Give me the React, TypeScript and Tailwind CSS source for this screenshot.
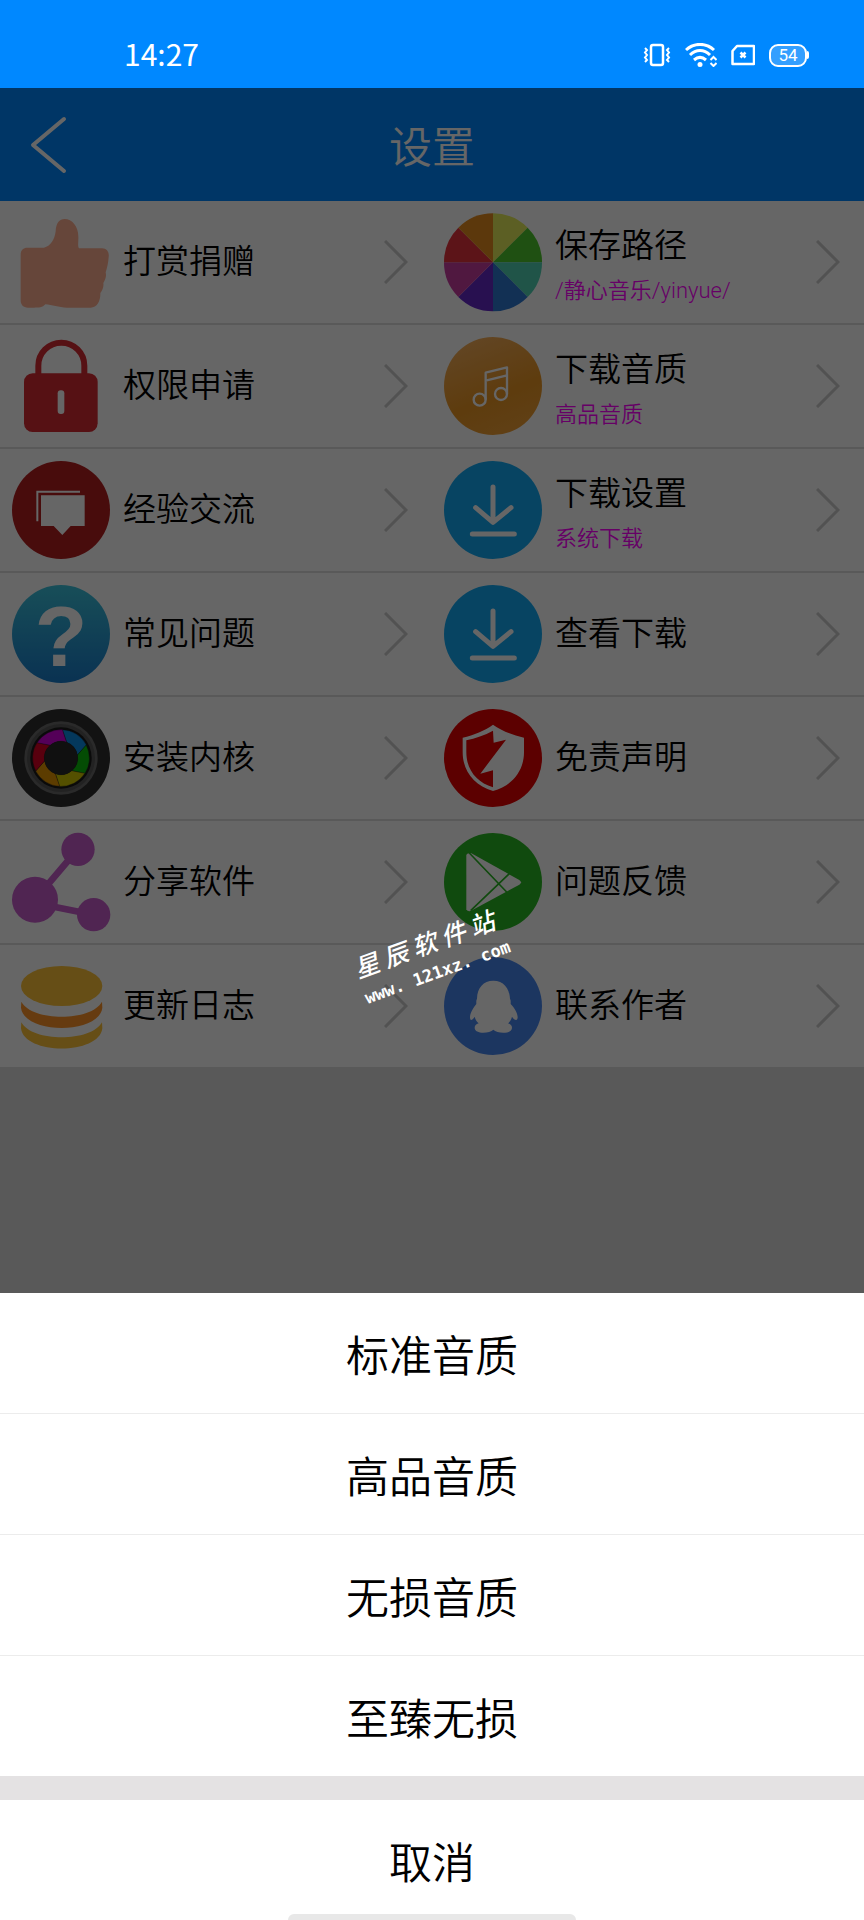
import type { ReactNode } from "react"

function Disc({ fill, children }: { fill: string; children?: ReactNode }) {
  return (
    <>
      <circle cx="147" cy="147" r="147" fill={fill} />
      {children}
    </>
  )
}

const thumb = (
  <path
    fill="#ffaf91"
    d="M46 104H96C115 100 128 80 131 55C132 30 142 18 158 18C180 18 199 40 199 70C200 85 196 98 201 106H270C285 106 292 118 290 132C289 150 285 165 281 178C284 190 280 200 274 210C276 222 271 232 265 240C266 262 256 284 236 284H165C140 284 120 275 100 274C92 284 80 284 66 284H48C34 284 26 276 26 262V124C26 111 34 104 46 104Z"
  />
)

const wheelColors = ["#e6ee5a", "#4fc82d", "#50d2b4", "#2d78d2", "#6428c8", "#c83ca0", "#e6323c", "#e68c1e"]

const wheel = (
  <>
    {wheelColors.map((color, i) => (
      <path key={color} fill={color} d="M147 148V1A147 147 0 0 1 251 44Z" transform={`rotate(${i * 45} 147 148)`} />
    ))}
  </>
)

const lock = (
  <>
    <path d="M79 114V86a69 69 0 0 1 138 0V114" fill="none" stroke="#d72b32" strokeWidth="18" />
    <rect x="36" y="109" width="221" height="176" rx="26" fill="#d72b32" />
    <rect x="137" y="160" width="20" height="71" rx="9" fill="#fff" />
  </>
)

const music = (
  <>
    <defs>
      <linearGradient id="music" x1="0.3" y1="0" x2="0.7" y2="1">
        <stop offset="0" stopColor="#f5ae5a" />
        <stop offset="0.6" stopColor="#eb9623" />
        <stop offset="1" stopColor="#f0a037" />
      </linearGradient>
    </defs>
    <Disc fill="url(#music)">
      <g fill="none" stroke="#fff" strokeWidth="7" strokeLinejoin="round">
        <circle cx="107" cy="188" r="18" />
        <circle cx="171" cy="171" r="18" />
        <path d="M125 188V107L189 91V171M125 131L189 115" />
      </g>
    </Disc>
  </>
)

const chat = (
  <Disc fill="#b41e20">
    <path d="M76 181V92H204" fill="none" stroke="#fff" strokeWidth="6" />
    <path d="M87 103H218V195H176L151 222L125 195H87Z" fill="#fff" />
  </Disc>
)

const question = (
  <>
    <defs>
      <linearGradient id="question" x1="0" y1="0" x2="0" y2="1">
        <stop offset="0" stopColor="#3cc3dc" />
        <stop offset="1" stopColor="#197dcd" />
      </linearGradient>
    </defs>
    <Disc fill="url(#question)">
      <text x="147" y="242" textAnchor="middle" fill="#fff" fontSize="258" fontWeight="700" fontFamily="Liberation Sans, sans-serif">
        ?
      </text>
    </Disc>
  </>
)

const download = (
  <Disc fill="#12aaf5">
    <path
      d="M147 78V182M95 140L147 184L201 140M85 219H211"
      fill="none"
      stroke="#fff"
      strokeWidth="15"
      strokeLinecap="round"
      strokeLinejoin="round"
    />
  </Disc>
)

const bladeColors = ["#0a8ce6", "#0abe0a", "#d2c800", "#e69600", "#dc0023", "#d200dc"]

const lens = (
  <Disc fill="#2d2d2d">
    <circle cx="147" cy="147" r="110" fill="#696969" />
    <circle cx="147" cy="147" r="102" fill="#555555" />
    <circle cx="147" cy="147" r="92" fill="#191919" />
    {bladeColors.map((color, i) => (
      <path
        key={color}
        fill={color}
        stroke="#191919"
        strokeWidth="1"
        d="M151 62A85 85 0 0 1 223 108L196 138A50 50 0 0 0 164 100Z"
        transform={`rotate(${i * 60} 147 147)`}
      />
    ))}
    <circle cx="147" cy="147" r="50" fill="#282828" />
  </Disc>
)

const shield = (
  <Disc fill="#e60000">
    <path d="M147 47C172 65 205 78 240 86V130C240 185 205 230 147 246C90 230 56 185 56 130V86C90 78 122 65 147 47Z" fill="#fff" />
    <path d="M147 65C122 79 94 88 67 94V130C67 182 98 220 147 235V184L109 194L186 92L149 101Z" fill="#e60000" />
  </Disc>
)

const share = (
  <g fill="#c85ccc">
    <path d="M69 200L198 48M69 210L245 245" stroke="#c85ccc" strokeWidth="20" />
    <circle cx="69" cy="200" r="69" />
    <circle cx="198" cy="49" r="50" />
    <circle cx="245" cy="245" r="50" />
  </g>
)

const play = (
  <Disc fill="#2ab823">
    <path d="M67 66Q68 59 82 61L226 141Q236 148 226 155L80 234Q68 236 67 229Z" fill="#fff" />
    <path d="M76 60L188 177M80 233L196 122" stroke="#2ab823" strokeWidth="5" />
  </Disc>
)

const coins = (
  <>
    <ellipse cx="149" cy="87" rx="122" ry="60" fill="#ffc337" />
    <path d="M28 134C60 194 238 194 270 134L271 152C262 233 36 233 27 152Z" fill="#ff9428" />
    <path d="M28 196C60 256 238 256 270 196L271 214C262 295 36 295 27 214Z" fill="#ffc337" />
  </>
)

const penguin = (
  <Disc fill="#4887f0">
    <path
      fill="#fff"
      d="M148 71C118 71 100 92 99 125C96 130 97 136 97 141C88 152 78 168 78 181C78 192 84 191 92 179C94 187 98 194 104 199C96 202 92 206 92 212C92 232 136 230 148 218C160 230 204 232 204 212C204 206 200 202 192 199C198 194 202 187 204 179C212 191 221 192 221 181C221 168 211 152 200 141C200 136 201 130 198 125C196 92 178 71 148 71Z"
    />
  </Disc>
)

type Item = { label: string; note?: string; icon: ReactNode }

const items: Item[] = [
  { label: "打赏捐赠", icon: thumb },
  { label: "保存路径", note: "/静心音乐/yinyue/", icon: wheel },
  { label: "权限申请", icon: lock },
  { label: "下载音质", note: "高品音质", icon: music },
  { label: "经验交流", icon: chat },
  { label: "下载设置", note: "系统下载", icon: download },
  { label: "常见问题", icon: question },
  { label: "查看下载", icon: download },
  { label: "安装内核", icon: lens },
  { label: "免责声明", icon: shield },
  { label: "分享软件", icon: share },
  { label: "问题反馈", icon: play },
  { label: "更新日志", icon: coins },
  { label: "联系作者", icon: penguin },
]

const options = ["标准音质", "高品音质", "无损音质", "至臻无损"]

function StatusBar() {
  return (
    <div className="flex h-[88px] items-center justify-between bg-[#0088ff] pt-5 pr-[55px] pl-[124px] text-white">
      <span className="pb-[2px] text-[30px] leading-8 font-normal">14:27</span>
      <div className="flex items-center gap-[14px] pt-[2px]">
        <svg className="h-6 w-[28px]" viewBox="0 0 28 24" fill="none" stroke="currentColor" strokeWidth="2.500">
          <rect x="8" y="2" width="12" height="20" rx="2" />
          <path d="M2 5L4 7L2 9.500L4 12L2 14.500L4 17L2 19M26 5L24 7L26 9.500L24 12L26 14.500L24 17L26 19" strokeWidth="2" />
        </svg>
        <svg className="h-6 w-[32px]" viewBox="0 0 32 24" fill="none" stroke="currentColor" strokeWidth="3">
          <path d="M1 7C9 -0.500 21 -0.500 29 7M5 12C11 6 19 6 25 12M9 17C13 13.500 17 13.500 21 17" />
          <circle cx="15" cy="21.500" r="2.500" fill="currentColor" stroke="none" />
          <path d="M25.500 17L28.500 14L31.500 17M25.500 20L28.500 23L31.500 20" strokeWidth="2" />
        </svg>
        <svg className="h-6 w-[24px]" viewBox="0 0 24 24" fill="none" stroke="currentColor" strokeWidth="2.500">
          <path d="M6 3H23V21H1.500V8Z" strokeLinejoin="round" />
          <path d="M9.500 9.500L14.500 14.500M14.500 9.500L9.500 14.500" />
        </svg>
        <div className="flex items-center">
          <span className="flex h-[23px] w-[38px] items-center justify-center rounded-[9px] border-2 border-white bg-white/20 font-['Roboto',sans-serif] text-[17px] leading-5 font-normal">
            54
          </span>
          <span className="h-2 w-[2px] rounded-r-full bg-white" />
        </div>
      </div>
    </div>
  )
}

function SettingRow({ item }: { item: Item }) {
  return (
    <li className="border-b-2 border-[#dedede] bg-white">
      <button type="button" className="flex h-[122px] w-full items-center gap-[13px] pr-6 pl-3 text-left">
        <svg className="size-[98px] shrink-0 overflow-visible" viewBox="0 0 294 294" aria-hidden="true">
          {item.icon}
        </svg>
        {item.note ? (
          <span className="flex min-w-0 flex-1 flex-col">
            <span className="text-[33px] leading-[58px]">{item.label}</span>
            <span className="font-['Roboto','Noto_Sans_CJK_SC',sans-serif] text-[22px] leading-[38px] text-[#ff00ff]">
              {item.note}
            </span>
          </span>
        ) : (
          <span className="min-w-0 flex-1 pb-1.5 text-[33px] leading-[58px]">{item.label}</span>
        )}
        <svg className="h-11 w-6 shrink-0" viewBox="0 0 24 44" fill="none" stroke="#cccccc" strokeWidth="3" aria-hidden="true">
          <path d="M1 1L22 22L1 43" />
        </svg>
      </button>
    </li>
  )
}

export default function App() {
  return (
    <div lang="zh-CN" className="flex min-h-screen flex-col font-['Noto_Sans_CJK_SC',sans-serif] font-[350] text-black">
      <StatusBar />

      <main className="relative flex-1 bg-[#dedede]">
        <header className="grid h-[113px] grid-cols-3 items-center bg-[#0088ff] px-7 text-white">
          <button type="button" aria-label="返回" className="justify-self-start">
            <svg className="h-[60px] w-10" viewBox="0 0 40 60" fill="none" stroke="currentColor" strokeWidth="4">
              <path d="M36 4L5 30L36 56" strokeLinecap="round" strokeLinejoin="round" />
            </svg>
          </button>
          <h1 className="pb-[2px] text-center text-[43px] leading-[60px]">设置</h1>
        </header>

        <ul className="grid grid-cols-2">
          {items.map((item) => (
            <SettingRow key={item.label} item={item} />
          ))}
        </ul>

        <div className="absolute inset-0 bg-black/60" />

        <div className="absolute top-[837px] left-1/2 w-max -translate-x-1/2 -rotate-20 text-center leading-8 text-white">
          <p className="pr-1.5 text-[25px] font-medium italic">星 辰 软 件 站</p>
          <p className="font-['DejaVu_Sans_Mono',monospace] text-[17px] leading-8 font-bold">www. 121xz. com</p>
        </div>
      </main>

      <section role="dialog" aria-label="下载音质" className="relative bg-white text-[43px]">
        <ul className="divide-y divide-[#ececec]">
          {options.map((option) => (
            <li key={option}>
              <button type="button" className="block h-[120px] w-full">
                {option}
              </button>
            </li>
          ))}
        </ul>
        <div className="h-6 bg-[#e4e2e3]" />
        <button type="button" className="block h-[120px] w-full">
          取消
        </button>
        <div className="absolute bottom-0 left-1/2 h-[6px] w-1/3 -translate-x-1/2 rounded-t-md bg-[#e8e8e8]" />
      </section>
    </div>
  )
}
